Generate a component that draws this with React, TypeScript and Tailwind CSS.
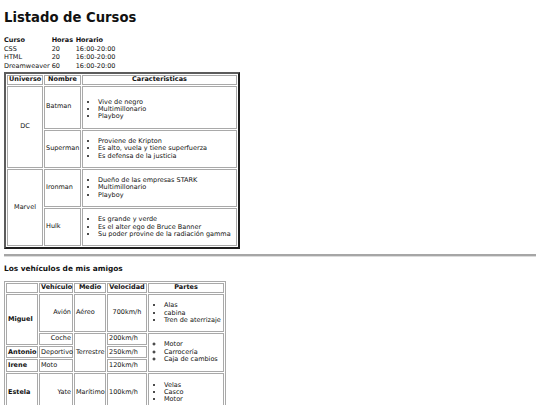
import React from "react";

const cursos = [
  { curso: "CSS", horas: "20", horario: "16:00-20:00" },
  { curso: "HTML", horas: "20", horario: "16:00-20:00" },
  { curso: "Dreamweaver", horas: "60", horario: "16:00-20:00" },
];

const heroes = [
  {
    universo: "DC",
    personajes: [
      { nombre: "Batman", rasgos: ["Vive de negro", "Multimillonario", "Playboy"], top: "mt-[12px]" },
      { nombre: "Superman", rasgos: ["Proviene de Kripton", "Es alto, vuela y tiene superfuerza", "Es defensa de la justicia"], top: "mt-[7px]" },
    ],
  },
  {
    universo: "Marvel",
    personajes: [
      { nombre: "Ironman", rasgos: ["Dueño de las empresas STARK", "Multimillonario", "Playboy"], top: "mt-[7px]" },
      { nombre: "Hulk", rasgos: ["Es grande y verde", "Es el alter ego de Bruce Banner", "Su poder provine de la radiación gamma"], top: "mt-[7px]" },
    ],
  },
];

const td = "border border-[#a9a9a9] px-[1px] py-0 align-middle whitespace-nowrap";
const th = "border border-[#a9a9a9] px-[1px] py-0 font-bold text-center whitespace-nowrap";

function List({ items, circle, top = "mt-[7px]", bottom = "mb-[7px]" }: { items: string[]; circle?: boolean; top?: string; bottom?: string }) {
  return (
    <ul className={`${circle ? "list-[circle]" : "list-disc"} list-outside pl-[14px] ${top} ${bottom}`}>
      {items.map((it) => (
        <li key={it} className="leading-[7.4px] whitespace-nowrap">{it}</li>
      ))}
    </ul>
  );
}

export default function App() {
  return (
    <div className="w-[540px] h-[405px] overflow-hidden bg-white text-[#111] font-['DejaVu_Sans',Verdana,sans-serif] text-[6.5px] leading-[7.7px] p-[4px]">
      <h1 className="text-[13.2px] leading-[15px] font-bold mt-[6px] mb-[11px]">Listado de Cursos</h1>

      {/* Cursos */}
      <table className="border-separate border-spacing-[1px] -ml-[1px]">
        <thead>
          <tr>
            <th className="text-left px-0">Curso</th>
            <th className="text-left px-0">Horas</th>
            <th className="text-left px-0">Horario</th>
          </tr>
        </thead>
        <tbody>
          {cursos.map((c) => (
            <tr key={c.curso}>
              <td className="pr-[1px]">{c.curso}</td>
              <td className="w-[23px]">{c.horas}</td>
              <td>{c.horario}</td>
            </tr>
          ))}
        </tbody>
      </table>

      {/* Heroes */}
      <table className="table-fixed w-[236px] border-separate border-spacing-[1px] border-2 border-t-[#5c5c5c] border-l-[#5c5c5c] border-r-[#1e1e1e] border-b-[#1e1e1e]">
        <thead>
          <tr>
            <th className={`${th} w-[36px]`}>Universo</th>
            <th className={`${th} w-[37px]`}>Nombre</th>
            <th className={th}>Caracteristicas</th>
          </tr>
        </thead>
        <tbody>
          {heroes.map((u) =>
            u.personajes.map((p, i) => (
              <tr key={p.nombre}>
                {i === 0 && (
                  <td rowSpan={u.personajes.length} className={`${td} text-center`}>
                    {u.universo}
                  </td>
                )}
                <td className={td}>{p.nombre}</td>
                <td className={td}>
                  <List items={p.rasgos} top={p.top} />
                </td>
              </tr>
            ))
          )}
        </tbody>
      </table>

      <hr className="mt-[5px] mb-0 h-0 border-0 border-t-2 border-t-[#a6a6a6] border-b border-b-[#dcdcdc]" />

      <h3 className="text-[7.4px] leading-[9px] font-bold mt-[7px] mb-[8px]">Los vehículos de mis amigos</h3>

      {/* Vehiculos */}
      <table className="table-fixed w-[222px] border-separate border-spacing-[1px] border border-[#a9a9a9]">
        <thead>
          <tr>
            <th className={`${th} w-[32px]`}></th>
            <th className={`${th} w-[34px]`}>Vehículo</th>
            <th className={`${th} w-[32px]`}>Medio</th>
            <th className={`${th} w-[40px]`}>Velocidad</th>
            <th className={th}>Partes</th>
          </tr>
        </thead>
        <tbody>
          <tr>
            <th rowSpan={2} className={`${th} text-left`}>Miguel</th>
            <td className={`${td} text-right`}>Avión</td>
            <td className={td}>Aéreo</td>
            <td className={`${td} text-center`}>700km/h</td>
            <td className={td}>
              <List items={["Alas", "cabina", "Tren de aterrizaje"]} top="mt-[7px]" bottom="mb-[7px]" />
            </td>
          </tr>
          <tr>
            <td className={`${td} text-right h-[11px]`}>Coche</td>
            <td rowSpan={3} className={td}>Terrestre</td>
            <td className={td}>200km/h</td>
            <td rowSpan={3} className={td}>
              <List items={["Motor", "Carrocería", "Caja de cambios"]} circle />
            </td>
          </tr>
          <tr>
            <th className={`${th} text-left h-[11px]`}>Antonio</th>
            <td className={td}>Deportivo</td>
            <td className={td}>250km/h</td>
          </tr>
          <tr>
            <th className={`${th} text-left h-[11px]`}>Irene</th>
            <td className={td}>Moto</td>
            <td className={td}>120km/h</td>
          </tr>
          <tr>
            <th className={`${th} text-left`}>Estela</th>
            <td className={`${td} text-right`}>Yate</td>
            <td className={td}>Marítimo</td>
            <td className={td}>100km/h</td>
            <td className={td}>
              <List items={["Velas", "Casco", "Motor"]} top="mt-[8px]" bottom="mb-[8px]" />
            </td>
          </tr>
        </tbody>
      </table>
    </div>
  );
}
